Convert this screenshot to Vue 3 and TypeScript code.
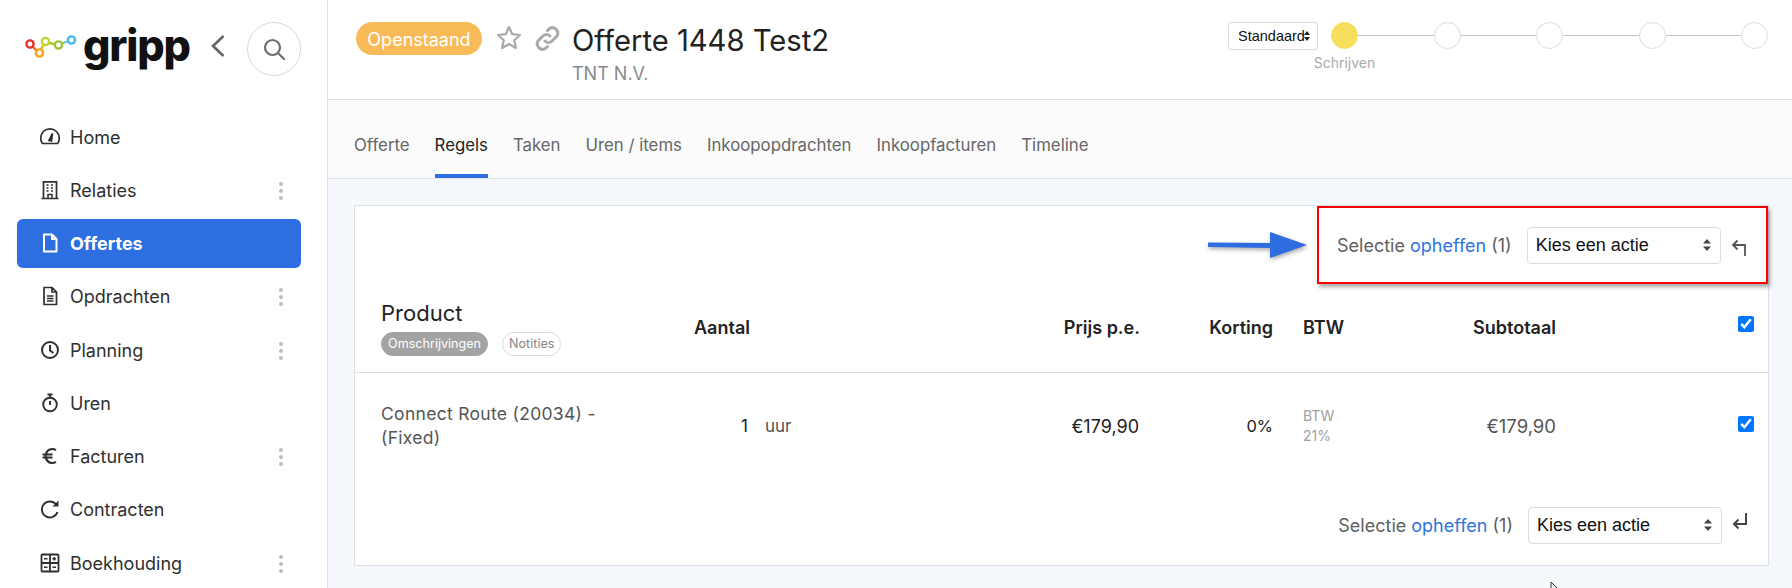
<script setup lang="ts">
const nav = [
  { label: 'Home', icon: 'home', dots: false },
  { label: 'Relaties', icon: 'building', dots: true },
  { label: 'Offertes', icon: 'file', dots: false, active: true },
  { label: 'Opdrachten', icon: 'filelines', dots: true },
  { label: 'Planning', icon: 'clock', dots: true },
  { label: 'Uren', icon: 'stopwatch', dots: false },
  { label: 'Facturen', icon: 'euro', dots: true },
  { label: 'Contracten', icon: 'redo', dots: false },
  { label: 'Boekhouding', icon: 'calc', dots: true },
]
const tabs = ['Offerte', 'Regels', 'Taken', 'Uren / items', 'Inkoopopdrachten', 'Inkoopfacturen', 'Timeline']
const steps = [1, 2, 3, 4]
</script>

<template>
  <div class="app">
    <aside class="sidebar">
      <div class="brand">
        <svg class="logo-mark" viewBox="0 0 52 24" width="52" height="24" fill="none" stroke-width="2.4">
          <path d="M5 9 L14 18" stroke="#ef6a1f" />
          <path d="M14 18 L20 7" stroke="#c6c81e" />
          <path d="M20 7 L33 10" stroke="#a7c72b" />
          <path d="M33 10 L46 5" stroke="#6cc4c8" />
          <circle cx="5" cy="9" r="3.6" stroke="#e6332a" fill="#fff" />
          <circle cx="14.5" cy="18" r="3.6" stroke="#f9a11b" fill="#fff" />
          <circle cx="20.5" cy="6.5" r="3.6" stroke="#c4d42a" fill="#fff" />
          <circle cx="33.5" cy="10" r="3.6" stroke="#9cc33a" fill="#fff" />
          <circle cx="46.5" cy="5" r="3.6" stroke="#45b9ea" fill="#fff" />
        </svg>
        <span class="logo-text">gripp</span>
        <svg class="collapse" viewBox="0 0 14 22" width="14" height="22" fill="none" stroke="#666" stroke-width="2.7">
          <path d="M12.5 1 L2 11 L12.5 21" />
        </svg>
        <button class="search">
          <svg viewBox="0 0 24 24" width="24" height="24" fill="none" stroke="#6f6f6f" stroke-width="2.2">
            <circle cx="10.5" cy="10.5" r="7.5" />
            <path d="M16 16 L22 22" stroke-linecap="round" />
          </svg>
        </button>
      </div>
      <nav class="nav">
        <a v-for="item in nav" :key="item.label" class="nav-item" :class="{ active: item.active }">
          <span class="nav-icon">
            <svg viewBox="0 0 20 20" width="20" height="20" fill="none" stroke="currentColor" stroke-width="1.7">
              <template v-if="item.icon === 'home'">
                <path d="M2.5 16.5 Q0.4 13.5 0.8 11 A9.2 9.2 0 0 1 19.2 11 Q19.6 13.5 17.5 16.5 Z" />
                <path d="M9 13.5 L12.5 6.5 L11.5 14 Z" fill="currentColor" />
              </template>
              <template v-else-if="item.icon === 'building'">
                <path d="M3.5 18.5 V1.8 H16.5 V18.5 M1.5 18.5 H18.5" />
                <path d="M6.5 5 H8.5 M11 5 H13 M6.5 8 H8.5 M11 8 H13 M6.5 11 H8.5 M11 11 H13 M8 18 V14.5 H12 V18" stroke-width="1.5" />
              </template>
              <template v-else-if="item.icon === 'file'">
                <path d="M4 1.5 H12 L16.5 6 V18.5 H4 Z M12 1.5 V6 H16.5" stroke-width="2" stroke-linejoin="round" />
              </template>
              <template v-else-if="item.icon === 'filelines'">
                <path d="M4 1.5 H12 L16.5 6 V18.5 H4 Z M12 1.5 V6 H16.5" stroke-linejoin="round" />
                <path d="M7 10 H13.5 M7 12.5 H13.5 M7 15 H13.5" stroke-width="1.4" />
              </template>
              <template v-else-if="item.icon === 'clock'">
                <circle cx="10" cy="10" r="8" stroke-width="2" />
                <path d="M10 5 V10.5 L13.5 13" stroke-width="2" />
              </template>
              <template v-else-if="item.icon === 'stopwatch'">
                <circle cx="10" cy="11.5" r="6.8" stroke-width="1.9" />
                <path d="M7.5 1.5 H12.5 M10 1.5 V5 M10 8 V12" stroke-width="1.9" />
              </template>
              <template v-else-if="item.icon === 'euro'">
                <path d="M16 4.2 Q14 3 12.3 3 Q6.5 3 5.5 10 Q6.5 17 12.3 17 Q14 17 16 15.8" stroke-width="2.1" />
                <path d="M2.5 8.5 H12.5 M2.5 11.5 H12.5" stroke-width="1.9" />
              </template>
              <template v-else-if="item.icon === 'redo'">
                <path d="M16.2 5.5 A8 8 0 1 0 17.5 13" stroke-width="1.9" />
                <path d="M18.5 1.5 V7.5 H12.5 Z" fill="currentColor" stroke="none" />
              </template>
              <template v-else>
                <rect x="1.5" y="1.5" width="17" height="17" rx="1" stroke-width="1.8" />
                <path d="M10 1.5 V18.5 M1.5 10 H18.5" stroke-width="1.8" />
                <path d="M4 5.8 H7.5 M12.5 5.8 H16 M14.2 4 V7.6 M4 14.3 H7.5 M12.5 14.3 H16" stroke-width="1.6" />
              </template>
            </svg>
          </span>
          <span class="nav-label">{{ item.label }}</span>
          <span v-if="item.dots" class="dots"><i></i><i></i><i></i></span>
        </a>
      </nav>
    </aside>

    <main class="main">
      <header class="topbar">
        <span class="badge">Openstaand</span>
        <svg class="star" viewBox="0 0 26 25" width="26" height="25" fill="none" stroke="#a9a9a9" stroke-width="2.2" stroke-linejoin="round">
          <path d="M13 2 L16.3 9.2 L24 10 L18.2 15.2 L19.9 23 L13 19 L6.1 23 L7.8 15.2 L2 10 L9.7 9.2 Z" />
        </svg>
        <svg class="chain" viewBox="0 0 27 27" width="27" height="27" fill="none" stroke="#a9a9a9" stroke-width="3" stroke-linecap="round">
          <path d="M11 16 A5 5 0 0 0 18 16 L23 11 A5.5 5.5 0 0 0 15.5 3.5 L13.5 5.5" />
          <path d="M16 11 A5 5 0 0 0 9 11 L4 16 A5.5 5.5 0 0 0 11.5 23.5 L13.5 21.5" />
        </svg>
        <div class="title-block">
          <h1 class="title">Offerte 1448 Test2</h1>
          <div class="subtitle">TNT N.V.</div>
        </div>
        <div class="workflow">
          <div class="mini-select">Standaard<svg class="mini-arrows" viewBox="0 0 6 10" width="6" height="10" fill="#222"><path d="M3 0 L6 4 H0 Z M3 10 L0 6 H6 Z" /></svg></div>
          <div class="stepper">
            <div class="step first">
              <span class="dot current"></span>
              <span class="step-label">Schrijven</span>
            </div>
            <template v-for="s in steps" :key="s">
              <span class="line"></span>
              <span class="dot"></span>
            </template>
          </div>
        </div>
      </header>

      <div class="tabs">
        <a v-for="tab in tabs" :key="tab" class="tab" :class="{ selected: tab === 'Regels' }">{{ tab }}</a>
      </div>

      <section class="content">
        <div class="card">
          <div class="action-row top">
            <svg class="big-arrow" viewBox="0 0 104 36" width="104" height="36">
              <path d="M2 15.5 L64 16 L64 5 L101 18 L64 31 L64 21 L2 20 Z" fill="#2d6de0" />
            </svg>
            <div class="highlight">
              <span class="sel-text">Selectie <a>opheffen</a> (1)</span>
              <div class="fake-select">
                Kies een actie
                <svg viewBox="0 0 8 14" width="8" height="14" fill="#444"><path d="M4 1 L8 5.5 H0 Z M4 13 L0 8.5 H8 Z" /></svg>
              </div>
              <svg class="return up" viewBox="0 0 16 18" width="16" height="18" fill="none" stroke="#555" stroke-width="1.8">
                <path d="M14 17 V6 H2 M6.5 1.5 L2 6 L6.5 10.5" />
              </svg>
            </div>
          </div>

          <div class="grid head">
            <div class="product-head">
              <div class="product-title">Product</div>
              <div class="pills">
                <span class="pill on">Omschrijvingen</span>
                <span class="pill">Notities</span>
              </div>
            </div>
            <div class="th">Aantal</div>
            <div class="th right">Prijs p.e.</div>
            <div class="th right">Korting</div>
            <div class="th btw-col">BTW</div>
            <div class="th right">Subtotaal</div>
            <div class="check-col"><input type="checkbox" checked /></div>
          </div>

          <div class="grid row">
            <div class="product-name">Connect Route (20034) -<br />(Fixed)</div>
            <div class="qty"><span class="qty-num">1</span><span class="qty-unit">uur</span></div>
            <div class="td right price">€179,90</div>
            <div class="td right">0%</div>
            <div class="btw-col btw-cell">BTW<br />21%</div>
            <div class="td right muted sub">€179,90</div>
            <div class="check-col"><input type="checkbox" checked /></div>
          </div>

          <div class="action-row bottom">
            <span class="sel-text">Selectie <a>opheffen</a> (1)</span>
            <div class="fake-select">
              Kies een actie
              <svg viewBox="0 0 8 14" width="8" height="14" fill="#444"><path d="M4 1 L8 5.5 H0 Z M4 13 L0 8.5 H8 Z" /></svg>
            </div>
            <svg class="return" viewBox="0 0 16 18" width="16" height="18" fill="none" stroke="#444" stroke-width="2">
              <path d="M14 1 V12 H2 M6.5 7.5 L2 12 L6.5 16.5" />
            </svg>
          </div>
        </div>
      </section>
      <svg class="cursor" viewBox="0 0 10 14" width="10" height="14" fill="#fff" stroke="#333" stroke-width="1">
        <path d="M1 1 V11 L3.5 9 L5.5 13 L7 12 L5.2 8.5 L8.5 8.5 Z" />
      </svg>
    </main>
  </div>
</template>

<style>
html, body { margin: 0; background: #fff; }
</style>

<style scoped>
* { box-sizing: border-box; }
.app {
  display: flex;
  width: 1792px;
  height: 588px;
  overflow: hidden;
  font-family: Inter, "Liberation Sans", sans-serif;
  color: #2b2b2b;
  background: #fff;
}
.sidebar {
  width: 328px;
  flex: none;
  border-right: 1px solid #dfe1e8;
  background: #fff;
}
.brand {
  display: flex;
  align-items: center;
  height: 76px;
  padding: 22px 0 0 25px;
}
.logo-mark { flex: none; margin-right: 6px; margin-top: -4px; }
.logo-text {
  font-size: 43px;
  font-weight: 800;
  letter-spacing: -1.2px;
  line-height: 54px;
  color: #111;
  width: 128px;
  margin-top: -9px;
}
.collapse { flex: none; margin-top: -6px; margin-left: 0; }
.search {
  width: 54px;
  height: 54px;
  margin-left: 22px;
  border: 1px solid #d8d8d8;
  border-radius: 50%;
  background: #fff;
  display: flex;
  align-items: center;
  justify-content: center;
  padding: 0;
  flex: none;
}
.nav {
  display: grid;
  grid-auto-rows: 49px;
  row-gap: 4.25px;
  margin: 36px 26px 0 17px;
}
.nav-item {
  display: flex;
  align-items: center;
  padding-left: 23px;
  border-radius: 6px;
  font-size: 18px;
  color: #2f2f2f;
}
.nav-label { flex: 1; padding-top: 1px; }
.nav-item.active {
  background: #2d6ee0;
  color: #fff;
  font-weight: 700;
}
.nav-icon { width: 30px; display: flex; flex: none; }
.dots {
  display: flex;
  flex-direction: column;
  gap: 3px;
  margin: 2px 18px 0 0;
}
.dots i {
  width: 4px;
  height: 4px;
  border-radius: 50%;
  background: #bdbdbd;
}
.main {
  flex: 1;
  position: relative;
  min-width: 0;
  background: #f5f8fd;
}
.topbar {
  display: flex;
  align-items: flex-start;
  height: 100px;
  padding: 22px 24px 0 28px;
  background: #fff;
  border-bottom: 1px solid #dedfe5;
}
.badge {
  width: 126px;
  height: 33px;
  line-height: 36px;
  border-radius: 17px;
  background: #f9bb57;
  color: #fff;
  font-size: 18px;
  font-weight: 400;
  text-align: center;
  flex: none;
}
.star { margin: 3px 0 0 14px; flex: none; }
.chain { margin: 3px 0 0 12px; flex: none; }
.title-block { margin-left: 11px; }
.title {
  margin: 0;
  font-size: 29.2px;
  font-weight: 400;
  line-height: 38px;
  color: #222;
}
.subtitle {
  font-size: 18px;
  line-height: 20px;
  margin-top: 4px;
  color: #8a8a8a;
}
.workflow {
  display: flex;
  margin-left: auto;
  align-items: flex-start;
}
.mini-select {
  position: relative;
  width: 90px;
  height: 28px;
  line-height: 26px;
  padding-left: 9px;
  border: 1px solid #d9d9d9;
  border-radius: 3px;
  font-family: "Liberation Sans", sans-serif;
  font-size: 14.5px;
  color: #111;
  background: #fff;
  white-space: nowrap;
}
.mini-arrows { position: absolute; right: 7px; top: 8px; }
.stepper {
  display: flex;
  align-items: flex-start;
  margin-left: 13px;
}
.step { position: relative; }
.step.first { width: 27px; height: 27px; }
.step-label {
  position: absolute;
  left: 50%;
  top: 32px;
  transform: translateX(-50%);
  font-size: 14px;
  line-height: 18px;
  color: #a9a9a9;
  white-space: nowrap;
}
.dot {
  display: block;
  width: 27px;
  height: 27px;
  border-radius: 50%;
  border: 1px solid #dcdcdc;
  background: #fff;
  flex: none;
}
.dot.current { background: #f5df5c; border-color: #f5df5c; }
.line {
  width: 75.5px;
  height: 1px;
  margin-top: 13px;
  background: #c4c4c4;
  flex: none;
}
.tabs {
  display: flex;
  gap: 25px;
  height: 79px;
  padding: 0 0 0 26px;
  background: #fbfbfc;
  border-bottom: 1px solid #dee0ea;
}
.tab {
  display: flex;
  align-items: center;
  height: 78px;
  padding-top: 15px;
  font-size: 16.8px;
  color: #666;
  border-bottom: 4px solid transparent;
}
.tab.selected { color: #222; border-bottom-color: #2d6ee0; }
.content { padding: 26px 23px 0 26px; }
.card {
  height: 361px;
  background: #fff;
  border: 1px solid #dcdfe6;
}
.action-row {
  display: flex;
  align-items: center;
  justify-content: flex-end;
}
.action-row.top {
  height: 78px;
  align-items: flex-start;
}
.big-arrow { margin: 21px 7px 0 0; filter: drop-shadow(1px 2px 2px rgba(0,0,0,.35)); }
.highlight {
  display: flex;
  align-items: center;
  width: 451px;
  height: 78px;
  padding-left: 18px;
  border: 2px solid #f00;
  box-shadow: 2px 3px 4px rgba(0, 0, 0, .35);
  background: #fff;
}
.sel-text {
  font-size: 18px;
  color: #5f5f5f;
  white-space: nowrap;
}
.sel-text a { color: #2f73e0; }
.fake-select {
  display: flex;
  align-items: center;
  justify-content: space-between;
  width: 194px;
  height: 37px;
  margin-left: 15px;
  padding: 0 9px 0 8px;
  border: 1px solid #dcdcdc;
  border-radius: 4px;
  font-family: "Liberation Sans", sans-serif;
  font-size: 18px;
  color: #111;
  background: #fff;
}
.return { margin-left: 10px; flex: none; }
.return.up { margin-top: 5px; }
.action-row.bottom {
  height: 36px;
  margin-top: 28px;
  padding-right: 20px;
}
.action-row.bottom .return { margin-top: -8px; }
.grid {
  display: grid;
  grid-template-columns: 339px 120px 326px 133px 127px 156px 1fr;
  align-items: center;
}
.head {
  height: 89px;
  border-bottom: 1px solid #dedede;
  padding-bottom: 8px;
}
.product-head { padding-left: 26px; }
.product-title {
  font-size: 22px;
  line-height: 28px;
  margin-top: 6px;
  color: #222;
}
.pills { display: flex; gap: 14px; margin-top: 5px; }
.pill {
  height: 24px;
  line-height: 22px;
  padding: 0 6px;
  border-radius: 12px;
  border: 1px solid #dcdcdc;
  font-size: 12.6px;
  color: #858585;
}
.pill.on {
  background: #a3a3a3;
  border-color: #a3a3a3;
  color: #fff;
}
.th { font-size: 18px; font-weight: 600; color: #222; padding-top: 6px; }
.right { text-align: right; }
.btw-col { padding-left: 30px; }
.check-col { padding-left: 182px; display: flex; }
.check-col input { width: 16px; height: 16px; margin: 0; accent-color: #0075ff; }
.head .check-col { margin-top: -1px; }
.row { height: 106px; }
.row .check-col { margin-top: -4px; }
.product-name {
  padding-left: 26px;
  font-size: 17.5px;
  line-height: 24px;
  letter-spacing: .3px;
  color: #555;
}
.qty { display: flex; }
.qty-num { width: 54px; text-align: right; color: #222; font-size: 17px; }
.qty-unit { margin-left: 17px; color: #555; font-size: 17px; }
.td { font-size: 16.5px; color: #222; }
.price { font-size: 18px; padding-right: 1px; }
.sub { font-size: 18.5px; }
.muted { color: #555; }
.btw-cell { font-size: 14px; line-height: 20px; color: #a0a0a0; }
.cursor { position: absolute; left: 1222px; top: 581px; }
</style>
